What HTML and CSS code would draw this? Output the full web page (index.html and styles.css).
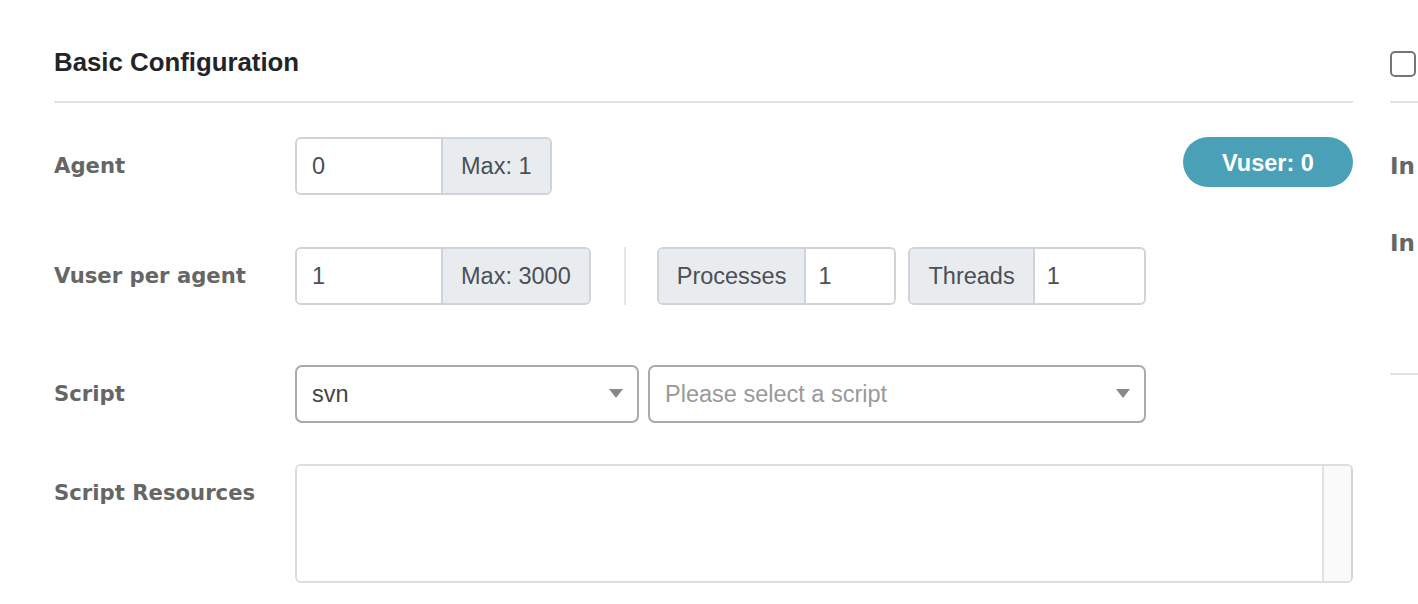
FILE: index.html
```html
<!DOCTYPE html>
<html>
<head>
<meta charset="utf-8">
<link rel="stylesheet" href="styles.css">
</head>
<body>
<div class="page">
  <section class="main">
    <header class="head">
      <h2 class="title">Basic Configuration</h2>
    </header>

    <div class="row row-agent">
      <div class="label">Agent</div>
      <div class="group">
        <div class="field w146">0</div>
        <div class="addon">Max: 1</div>
      </div>
      <div class="badge">Vuser: 0</div>
    </div>

    <div class="row row-vuser">
      <div class="label">Vuser per agent</div>
      <div class="group">
        <div class="field w146">1</div>
        <div class="addon">Max: 3000</div>
      </div>
      <div class="vdivider"></div>
      <div class="group">
        <div class="addon addon-first">Processes</div>
        <div class="field w88">1</div>
      </div>
      <div class="group group-gap">
        <div class="addon addon-first">Threads</div>
        <div class="field w113">1</div>
      </div>
    </div>

    <div class="row row-script">
      <div class="label">Script</div>
      <div class="select w344"><span class="sel-text">svn</span><span class="caret"></span></div>
      <div class="select w498 sel-gap"><span class="sel-text placeholder">Please select a script</span><span class="caret"></span></div>
    </div>

    <div class="row row-res">
      <div class="label">Script Resources</div>
      <div class="resbox">
        <div class="res-area"></div>
        <div class="res-scroll"></div>
      </div>
    </div>
  </section>

  <aside class="side">
    <header class="head side-head">
      <span class="checkbox"></span>
    </header>
    <div class="side-row side-r1">In</div>
    <div class="side-row side-r2">In</div>
    <div class="side-rule"></div>
  </aside>
</div>
</body>
</html>
```

FILE: styles.css
```css
html, body {
  margin: 0;
  padding: 0;
  background: #ffffff;
  overflow: hidden;
}
body {
  width: 1418px;
  height: 604px;
  font-family: "Liberation Sans", Arial, sans-serif;
}
.page {
  display: flex;
  gap: 37px;
  padding-left: 54px;
}
.main {
  width: 1299px;
  flex: none;
}
.head {
  margin-top: 22px;
  height: 79px;
  border-bottom: 2px solid #dee2e6;
  display: flex;
  align-items: center;
}
.title {
  margin: 0;
  font-size: 25.8px;
  font-weight: bold;
  color: #212529;
  padding-top: 1px;
}
.row {
  display: flex;
  align-items: center;
}
.row-agent { margin-top: 34px; align-items: flex-start; }
.row-vuser { margin-top: 52px; }
.row-script { margin-top: 60px; }
.row-res { margin-top: 41px; align-items: flex-start; }

.label {
  width: 241px;
  flex: none;
  line-height: 58px;
  font-family: "DejaVu Sans", Verdana, sans-serif;
  font-weight: bold;
  font-size: 21.2px;
  color: #666666;
}
.group {
  display: flex;
  height: 58px;
  box-sizing: border-box;
  border: 2px solid #ced4da;
  border-radius: 6px;
  overflow: hidden;
  font-size: 23.5px;
  color: #495057;
}
.group-gap { margin-left: 12px; }
.field {
  background: #fff;
  display: flex;
  align-items: center;
  padding-left: 15px;
  box-sizing: border-box;
}
.w146 { width: 144px; }
.w88 { width: 88px; padding-left: 12px; }
.w113 { width: 109px; padding-left: 12px; }
.addon {
  background: #e9ecef;
  border-left: 2px solid #ced4da;
  display: flex;
  align-items: center;
  padding: 0 18px 0 18px;
  white-space: nowrap;
}
.addon-first {
  border-left: none;
  border-right: 2px solid #ced4da;
}
.vdivider {
  width: 2px;
  height: 58px;
  background: #e4e7ea;
  margin: 0 31px 0 33px;
}
.badge {
  margin-left: auto;
  width: 170px;
  height: 50px;
  border-radius: 25px;
  background: #4aa1b7;
  color: #ffffff;
  font-weight: bold;
  font-size: 23.5px;
  display: flex;
  align-items: center;
  justify-content: center;
  padding-top: 2px;
  box-sizing: border-box;
}
.select {
  height: 58px;
  box-sizing: border-box;
  border: 2px solid #aaaaaa;
  border-radius: 7px;
  display: flex;
  align-items: center;
  justify-content: space-between;
  padding: 0 14px 0 15px;
  font-size: 23.5px;
  color: #444444;
}
.w344 { width: 344px; }
.w498 { width: 498px; }
.sel-gap { margin-left: 9px; }
.placeholder { color: #999999; }
.caret {
  width: 0;
  height: 0;
  border-left: 7px solid transparent;
  border-right: 7px solid transparent;
  border-top: 9px solid #888888;
  margin-top: -1px;
}
.resbox {
  width: 1058px;
  height: 119px;
  box-sizing: border-box;
  border: 2px solid #dddddd;
  border-right-color: #d4d4d4;
  border-radius: 6px;
  display: flex;
  overflow: hidden;
}
.res-area { flex: 1; background: #fff; }
.res-scroll {
  width: 27px;
  background: #fafafa;
  border-left: 2px solid #e2e2e2;
}

.side {
  width: 28px;
  flex: none;
}
.side-head {
  justify-content: flex-start;
}
.checkbox {
  width: 26px;
  height: 26px;
  box-sizing: border-box;
  border: 2px solid #767676;
  border-radius: 5px;
  margin-top: 5px;
}
.side-row {
  font-family: "DejaVu Sans", Verdana, sans-serif;
  font-weight: bold;
  font-size: 23px;
  color: #666666;
  line-height: 30px;
  white-space: nowrap;
}
.side-r1 { margin-top: 48px; }
.side-r2 { margin-top: 47px; }
.side-rule {
  margin-top: 115px;
  height: 2px;
  background: #dee2e6;
}
```
